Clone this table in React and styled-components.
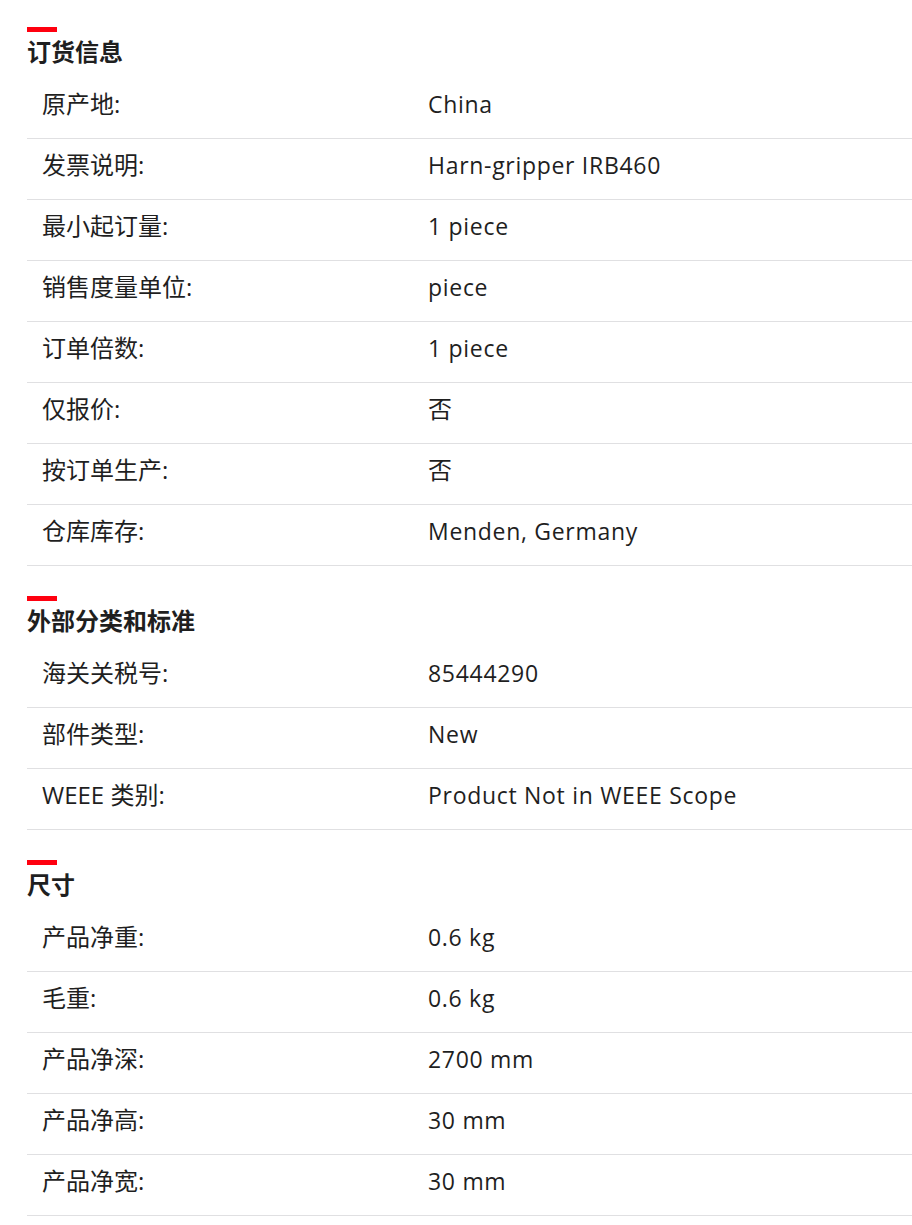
import React from "react";
import styled, { createGlobalStyle } from "styled-components";

const GlobalStyle = createGlobalStyle`
  html, body {
    margin: 0;
    padding: 0;
    background: #ffffff;
  }
  body {
    font-family: "Open Sans", "Noto Sans CJK SC", sans-serif;
    color: #1f1f1f;
  }
`;

const Page = styled.main`
  display: flex;
  flex-direction: column;
  gap: 30px;
  padding: 27px 0 8px 27px;
`;

const Section = styled.section`
  display: flex;
  flex-direction: column;
`;

const Title = styled.h2`
  margin: 0 0 12px;
  font-size: 24px;
  line-height: 30px;
  font-weight: 700;
  color: #1f1f1f;
  font-family: "Noto Sans CJK SC", sans-serif;

  &::before {
    content: "";
    display: block;
    width: 30px;
    height: 5px;
    margin-bottom: 4px;
    background: #ff000f;
  }
`;

const List = styled.dl`
  margin: 0;
  display: flex;
  flex-direction: column;
`;

const Row = styled.div`
  display: grid;
  grid-template-columns: 401px 1fr;
  align-items: center;
  box-sizing: border-box;
  height: 61px;
  padding-bottom: 9px;
  border-bottom: 1px solid #e0e0e2;
  line-height: 30px;
`;

const Label = styled.dt`
  margin: 0;
  padding-left: 15px;
  font-size: 24px;
  font-family: "Open Sans", "Noto Sans CJK SC", sans-serif;
  font-weight: 400;
`;

const Value = styled.dd`
  margin: 0;
  font-size: ${(p) => (p.$cjk ? "24px" : "23px")};
  letter-spacing: ${(p) => (p.$cjk ? "0" : "0.7px")};
  font-family: "Open Sans", "Noto Sans CJK SC", sans-serif;
`;

const sections = [
  {
    title: "订货信息",
    rows: [
      ["原产地:", "China"],
      ["发票说明:", "Harn-gripper IRB460"],
      ["最小起订量:", "1 piece"],
      ["销售度量单位:", "piece"],
      ["订单倍数:", "1 piece"],
      ["仅报价:", "否"],
      ["按订单生产:", "否"],
      ["仓库库存:", "Menden, Germany"],
    ],
  },
  {
    title: "外部分类和标准",
    rows: [
      ["海关关税号:", "85444290"],
      ["部件类型:", "New"],
      ["WEEE 类别:", "Product Not in WEEE Scope"],
    ],
  },
  {
    title: "尺寸",
    rows: [
      ["产品净重:", "0.6 kg"],
      ["毛重:", "0.6 kg"],
      ["产品净深:", "2700 mm"],
      ["产品净高:", "30 mm"],
      ["产品净宽:", "30 mm"],
    ],
  },
];

const isCjk = (s) => /[\u3400-\u9fff]/.test(s);

export default function App() {
  return (
    <>
      <GlobalStyle />
      <Page>
        {sections.map((s) => (
          <Section key={s.title}>
            <Title>{s.title}</Title>
            <List>
              {s.rows.map(([k, v]) => (
                <Row key={k}>
                  <Label>{k}</Label>
                  <Value $cjk={isCjk(v)}>{v}</Value>
                </Row>
              ))}
            </List>
          </Section>
        ))}
      </Page>
    </>
  );
}
